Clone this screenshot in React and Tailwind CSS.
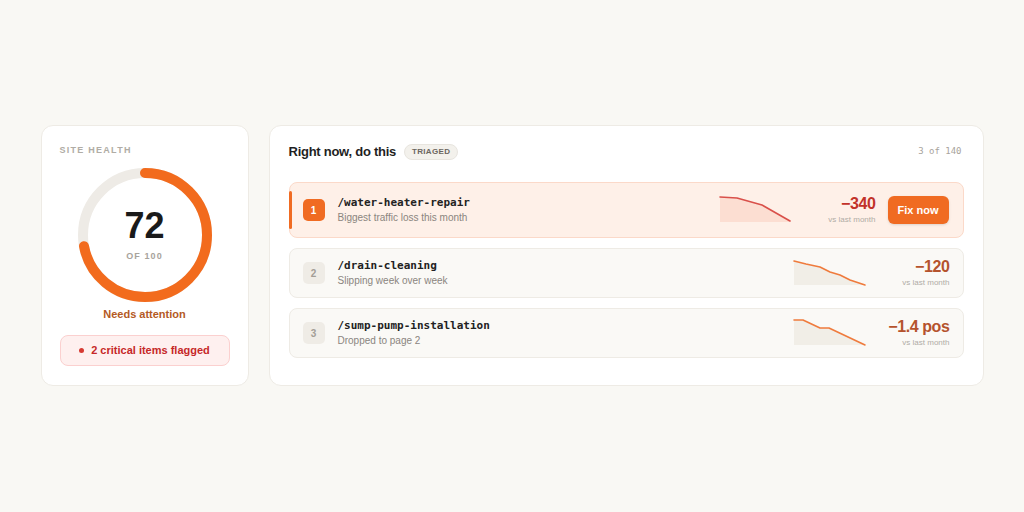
import React from 'react'

const rows = [
  {
    n: 1,
    slug: '/water-heater-repair',
    note: 'Biggest traffic loss this month',
    value: '−340',
    active: true,
    line: '0,0 17,1 42,8 70,24',
  },
  {
    n: 2,
    slug: '/drain-cleaning',
    note: 'Slipping week over week',
    value: '−120',
    line: '0,1 12,4 26,7 36,12 46,15 56,20 71,25',
  },
  {
    n: 3,
    slug: '/sump-pump-installation',
    note: 'Dropped to page 2',
    value: '−1.4 pos',
    line: '0,0 9,0 26,8 35,8 71,25',
  },
]

function Spark({ points, active }) {
  const last = points.split(' ').pop().split(',')
  const area = `${points} ${last[0]},25 0,25`
  return (
    <svg width="72" height="26" viewBox="0 0 72 26" className="shrink-0 overflow-visible">
      <polygon points={area} fill={active ? '#fcdccf' : '#efece6'} opacity="0.9" />
      <polyline
        points={points}
        fill="none"
        stroke={active ? '#d9504a' : '#ef7b3d'}
        strokeWidth="1.6"
        strokeLinejoin="round"
        strokeLinecap="round"
      />
    </svg>
  )
}

function Row({ row }) {
  const { n, slug, note, value, active, line } = row
  return (
    <div
      className={`relative flex items-center pl-[13px] rounded-lg border ${
        active ? 'h-[56px] pr-[14px] bg-[#fef0e8] border-[#fbd9c9]' : 'h-[50px] pr-[13px] bg-[#faf9f6] border-[#eeebe5]'
      }`}
    >
      {active && <span className="absolute -left-px top-2 bottom-2 w-[3px] rounded-full bg-[#f06b22]" />}
      <div
        className={`w-[22px] h-[22px] rounded-[5px] flex items-center justify-center text-[10px] font-bold ${
          active ? 'bg-[#f06b22] text-white' : 'bg-[#efece6] text-[#a39e96]'
        }`}
      >
        {n}
      </div>
      <div className="ml-[13px] flex-1 min-w-0">
        <div className="font-['DejaVu_Sans_Mono',monospace] text-[11px] font-bold text-[#222] leading-[14px]">{slug}</div>
        <div className="text-[10px] text-[#8a857e] leading-[13px] mt-[1px]">{note}</div>
      </div>
      <div className="flex items-center gap-3">
        <Spark points={line} active={active} />
        <div className="w-[72px] text-right">
          <div className={`text-[16px] font-bold leading-[18px] tracking-tight ${active ? 'text-[#c2322a]' : 'text-[#b5532d]'}`}>
            {value}
          </div>
          <div className="text-[8px] text-[#b0aca6] leading-[11px] mt-[1px]">vs last month</div>
        </div>
        {active && (
          <button className="h-[28px] w-[61px] rounded-md bg-[#f06b22] text-white text-[11px] font-bold shadow-sm">
            Fix now
          </button>
        )}
      </div>
    </div>
  )
}

function Ring() {
  const r = 62
  const c = 2 * Math.PI * r
  return (
    <div className="relative w-[134px] h-[134px] mt-3 mx-auto">
      <svg width="134" height="134" viewBox="0 0 134 134" className="-rotate-90">
        <circle cx="67" cy="67" r={r} fill="none" stroke="#eeebe6" strokeWidth="10" />
        <circle
          cx="67"
          cy="67"
          r={r}
          fill="none"
          stroke="#f26b1d"
          strokeWidth="10"
          strokeLinecap="round"
          strokeDasharray={`${c * 0.72} ${c}`}
        />
      </svg>
      <div className="absolute inset-0 flex flex-col items-center justify-center">
        <div className="text-[36px] font-bold leading-none text-[#1a1a1a]">72</div>
        <div className="mt-[6px] text-[9px] font-bold tracking-[0.12em] text-[#a8a39c] leading-[12px]">OF 100</div>
      </div>
    </div>
  )
}

export default function App() {
  return (
    <div className="min-h-screen bg-[#f9f8f4] flex items-center justify-center font-['Liberation_Sans',Arial,sans-serif]">
      <div className="flex gap-5 -mt-px">
        {/* Site health */}
        <div className="w-[208px] bg-white border border-[#eeebe5] rounded-xl p-[18px] pb-[19px] flex flex-col">
          <div className="text-[9px] font-bold tracking-[0.14em] text-[#b0aca5] leading-[12px]">SITE HEALTH</div>
          <Ring />
          <div className="mt-1 text-center text-[11px] font-bold text-[#b45a24] leading-[16px]">Needs attention</div>
          <div className="mt-[13px] h-[31px] rounded-lg bg-[#fef0ef] border border-[#fbd0cf] flex items-center justify-center gap-[7px]">
            <span className="w-[5px] h-[5px] rounded-full bg-[#d63a32]" />
            <span className="text-[11px] font-bold text-[#c62828]">2 critical items flagged</span>
          </div>
        </div>

        {/* Triage */}
        <div className="w-[715px] bg-white border border-[#eeebe5] rounded-xl p-[19px]">
          <div className="h-[14px] flex items-center">
            <div className="text-[13px] font-bold text-[#1f1f1f] tracking-[-0.02em]">Right now, do this</div>
            <span className="ml-2 h-[16px] px-[7px] rounded-full bg-[#f3f1ec] border border-[#e8e5df] flex items-center text-[8px] font-bold tracking-[0.04em] text-[#6b665f]">
              TRIAGED
            </span>
            <div className="ml-auto pr-[2px] font-['DejaVu_Sans_Mono',monospace] text-[9px] text-[#a8a39c]">3 of 140</div>
          </div>
          <div className="mt-[23px] flex flex-col gap-[10px]">
            {rows.map((row) => (
              <Row key={row.n} row={row} />
            ))}
          </div>
        </div>
      </div>
    </div>
  )
}
